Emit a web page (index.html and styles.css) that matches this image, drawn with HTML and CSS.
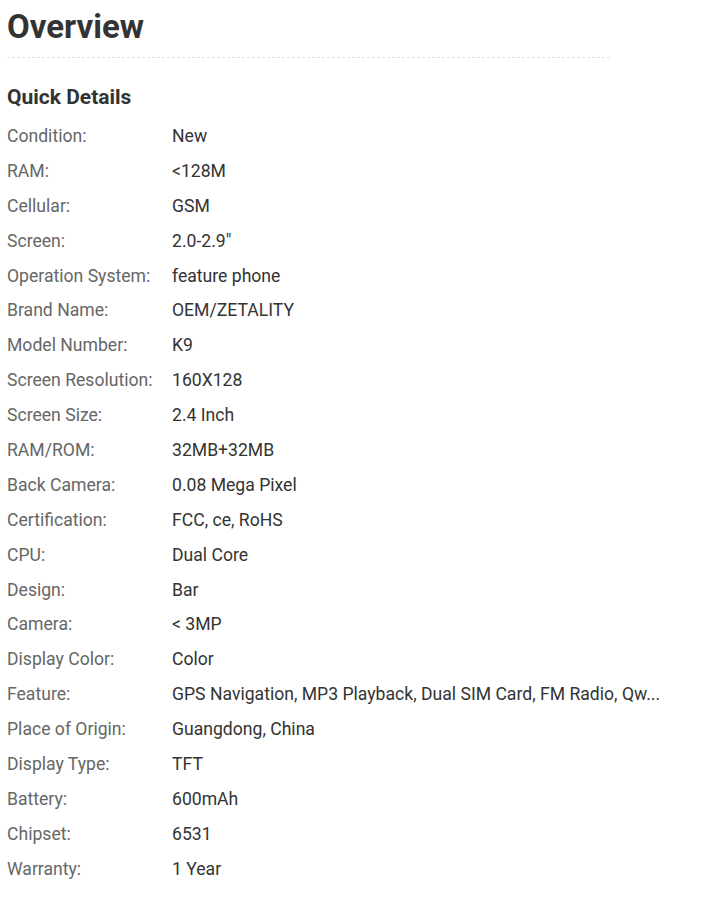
FILE: index.html
```html
<!DOCTYPE html>
<html lang="en">
<head>
  <meta charset="UTF-8" />
  <title>Overview</title>
  <link rel="stylesheet" href="styles.css">
</head>
<body>
  <div class="overview">
    <h1>Overview</h1>
    <h3>Quick Details</h3>
    <dl class="details">
      <dt>Condition:</dt><dd>New</dd>
      <dt>RAM:</dt><dd>&lt;128M</dd>
      <dt>Cellular:</dt><dd>GSM</dd>
      <dt>Screen:</dt><dd>2.0-2.9"</dd>
      <dt>Operation System:</dt><dd>feature phone</dd>
      <dt>Brand Name:</dt><dd>OEM/ZETALITY</dd>
      <dt>Model Number:</dt><dd>K9</dd>
      <dt>Screen Resolution:</dt><dd>160X128</dd>
      <dt>Screen Size:</dt><dd>2.4 Inch</dd>
      <dt>RAM/ROM:</dt><dd>32MB+32MB</dd>
      <dt>Back Camera:</dt><dd>0.08 Mega Pixel</dd>
      <dt>Certification:</dt><dd>FCC, ce, RoHS</dd>
      <dt>CPU:</dt><dd>Dual Core</dd>
      <dt>Design:</dt><dd>Bar</dd>
      <dt>Camera:</dt><dd>&lt; 3MP</dd>
      <dt>Display Color:</dt><dd>Color</dd>
      <dt>Feature:</dt><dd title="GPS Navigation, MP3 Playback, Dual SIM Card, FM Radio, Qwerty Keyboard">GPS Navigation, MP3 Playback, Dual SIM Card, FM Radio, Qw...</dd>
      <dt>Place of Origin:</dt><dd>Guangdong, China</dd>
      <dt>Display Type:</dt><dd>TFT</dd>
      <dt>Battery:</dt><dd>600mAh</dd>
      <dt>Chipset:</dt><dd>6531</dd>
      <dt>Warranty:</dt><dd>1 Year</dd>
    </dl>
  </div>
</body>
</html>
```

FILE: styles.css
```css
body {
  margin: 0;
  padding: 0 7px;
  font-family: Roboto, "Liberation Sans", Arial, sans-serif;
  color: #333;
  background: #fff;
}
.overview {
  width: 660px;
}
h1 {
  margin: 0;
  padding: 7px 0 10px;
  width: 603px;
  font-size: 33px;
  line-height: 40px;
  font-weight: 700;
  color: #333;
  border-bottom: 1px dashed #e3e3e3;
}
h3 {
  margin: 0;
  padding-top: 25px;
  font-size: 21px;
  line-height: 28px;
  font-weight: 700;
  color: #333;
}
.details {
  display: grid;
  grid-template-columns: 165px 1fr;
  grid-auto-rows: 34.9px;
  margin: 0;
  padding-top: 8px;
  font-size: 17.6px;
  line-height: 35px;
}
dt {
  color: #666;
  white-space: nowrap;
}
dd {
  margin: 0;
  color: #333;
  white-space: nowrap;
}
```
